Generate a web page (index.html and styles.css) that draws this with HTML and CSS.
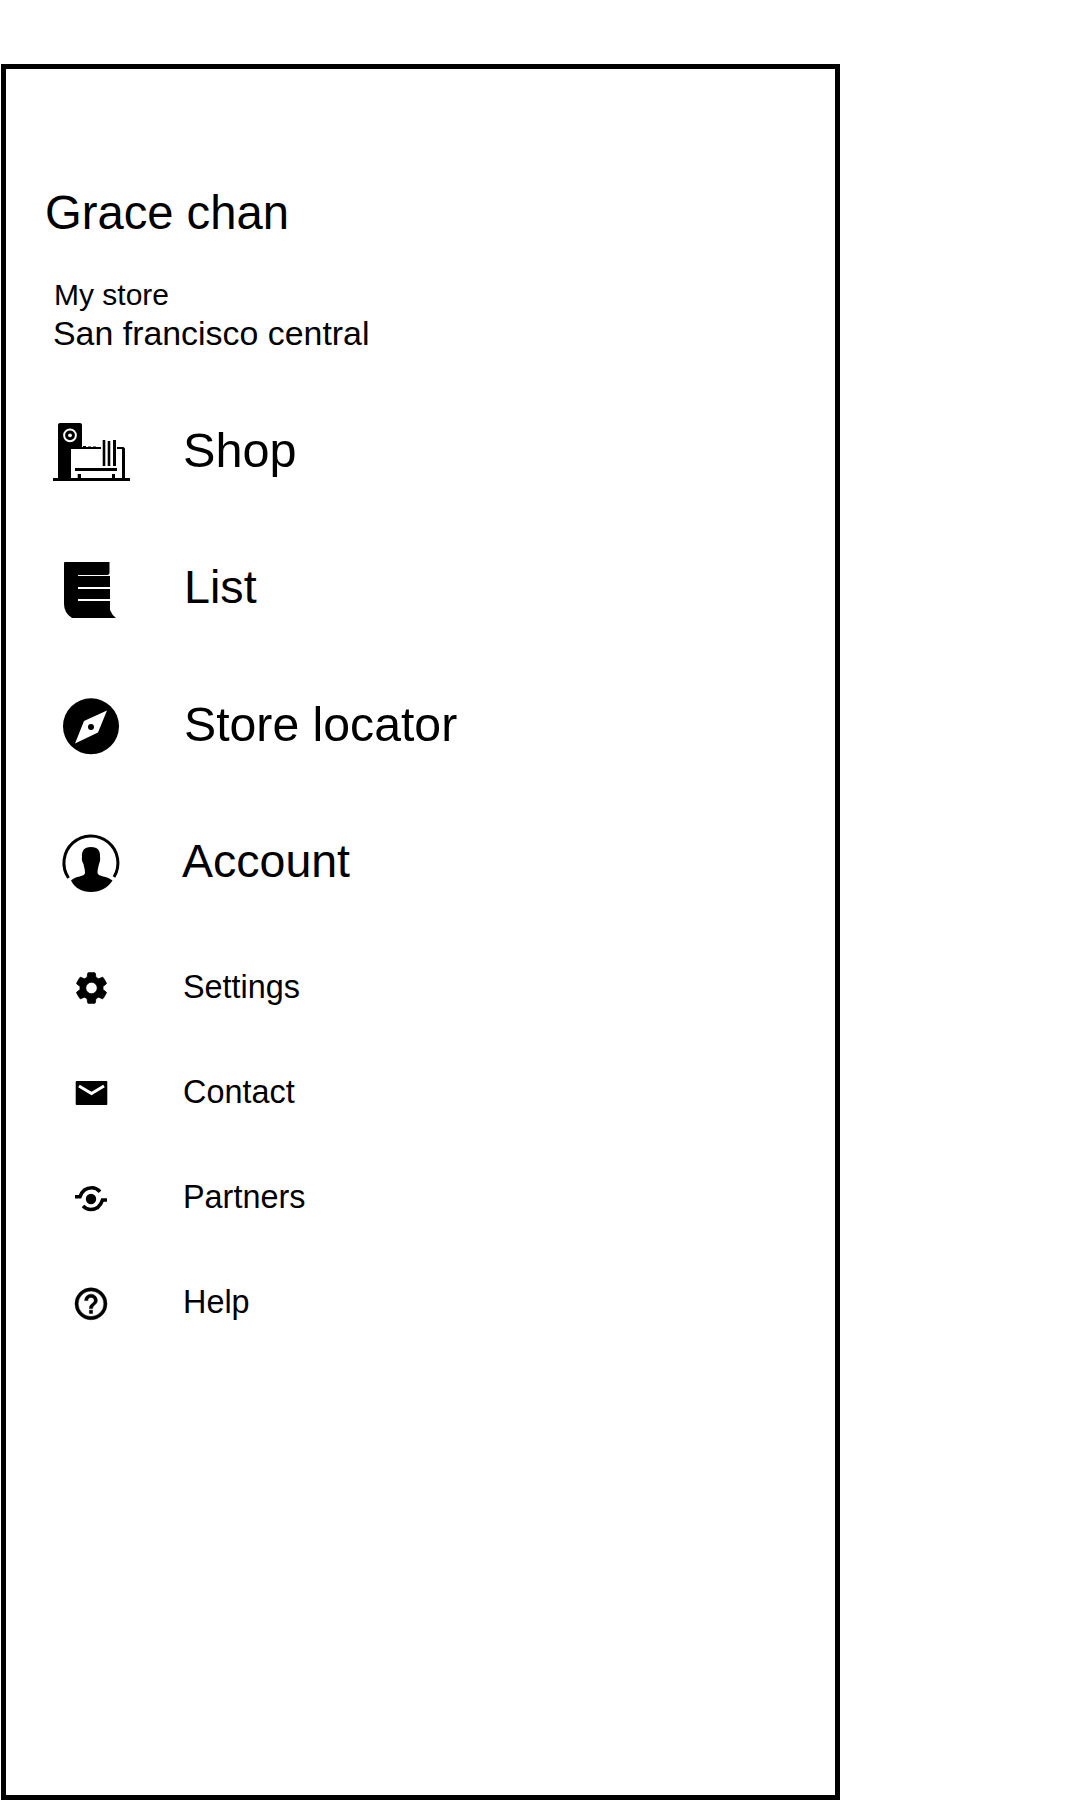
FILE: index.html
```html
<!DOCTYPE html>
<html lang="en">
<head>
<meta charset="utf-8">
<title>Store menu</title>
<link rel="stylesheet" href="styles.css">
</head>
<body>
<main class="drawer">
  <header class="profile">
    <h1 class="name">Grace chan</h1>
    <p class="store-label">My store</p>
    <p class="store-name">San francisco central</p>
  </header>
  <nav>
    <ul class="menu primary">
      <li class="item shop">
        <svg viewBox="0 -3 95 75"><path d="M13 63V10q0-2 2-2h20q2 0 2 2v22h19v2H26V63zM72 32h6.500l1.500 1.500V63h-3V34h-5zM38 31h3v1h2v-.5h3v.5h2v-.5h3v1H38zM57.700 25h2.600v26h-2.600zM62.700 26h2.600v25h-2.600zM68 25h3v26h-3zM30 53h42v3H30zM32.700 59H36v4h-3.300zM67 59h3v4h-3zM8 63h77v3H8z"/><circle cx="25" cy="20.300" r="5.900" fill="none" stroke="#fff" stroke-width="2"/><circle cx="25" cy="20.300" r="1.900" fill="#fff"/></svg>
        <span>Shop</span>
      </li>
      <li class="item list">
        <svg viewBox="0 -1 95 75"><path d="M19 13q0-1 1-1h44.500v11.500L63 25H33v1h32v11H33v2h32v10H33v2h32v9q2 5 6 8H27q-8-5-8-14z"/></svg>
        <span>List</span>
      </li>
      <li class="item locator">
        <svg viewBox="0 1 95 75"><circle cx="46" cy="41.300" r="28"/><path fill="#fff" d="M62 25.500 53 47.500 30 58.500l9-22.500z"/><circle cx="46" cy="42" r="3"/></svg>
        <span>Store locator</span>
      </li>
      <li class="item account">
        <svg viewBox="0 -2 95 75"><path d="M23.500 53A27 27 0 1 1 69 52" fill="none" stroke="#000" stroke-width="3"/><path d="M46 22c7 0 9.500 4 9 10 .5 2 0 5-1 7-.5 3-1.500 5-1.500 9 1 4 9 2.500 15 7.500-5 7.500-12 11.500-21.500 11.500s-16-4-20-11.500c5-5 13.500-3.500 14-7.500 0-4-1-6-1.500-9-1.500-2-2-5-1.500-7-.5-6 2-10 9-10z"/></svg>
        <span>Account</span>
      </li>
    </ul>
    <ul class="menu secondary">
      <li class="item">
        <svg viewBox="0 -1 55 55"><path stroke="#000" stroke-width=".5" transform="translate(7.300 8.800) scale(1.600)" d="M19.140 12.940c.04-.3.060-.61.060-.94 0-.32-.02-.64-.07-.94l2.030-1.580c.18-.14.230-.41.120-.61l-1.920-3.320c-.12-.22-.37-.29-.59-.22l-2.390.96c-.5-.38-1.030-.7-1.620-.94l-.36-2.540c-.04-.24-.24-.41-.48-.41h-3.840c-.24 0-.43.170-.47.410l-.36 2.540c-.59.240-1.130.570-1.620.940l-2.390-.96c-.22-.08-.47 0-.59.220L2.740 8.870c-.12.210-.08.470.120.610l2.030 1.580c-.05.300-.09.630-.09.940s.02.640.07.940l-2.030 1.580c-.18.140-.23.410-.12.610l1.920 3.320c.12.220.370.290.590.220l2.390-.96c.5.380 1.030.7 1.620.940l.36 2.540c.05.240.240.410.480.410h3.840c.24 0 .440-.17.470-.41l.36-2.540c.59-.24 1.130-.56 1.620-.94l2.390.96c.22.080.470 0 .590-.22l1.920-3.320c.12-.22.070-.47-.12-.61zM12 15.600A3.600 3.600 0 1 1 12 8.400a3.600 3.600 0 0 1 0 7.200z"/></svg>
        <span>Settings</span>
      </li>
      <li class="item">
        <svg viewBox="0 -1 55 55"><rect x="10.700" y="16" width="31.600" height="24" rx="1"/><path d="m14 21 12.500 7.500L39 21" fill="none" stroke="#fff" stroke-width="3"/></svg>
        <span>Contact</span>
      </li>
      <li class="item">
        <svg viewBox="0 -1 55 55"><circle cx="26" cy="29" r="5.200"/><path d="M10 26.700h5q3-9 12-9 4.500 0 8 4M42 30h-4.500q-3 9.500-12 9.500-4 0-7.500-3.500" fill="none" stroke="#000" stroke-width="3.600"/></svg>
        <span>Partners</span>
      </li>
      <li class="item help">
        <svg viewBox="0 -1 55 55"><path stroke="#000" stroke-width=".3" transform="translate(6.800 9.600) scale(1.600)" d="M11 18h2v-2h-2zm1-16a10 10 0 1 0 0 20 10 10 0 0 0 0-20zm0 18a8 8 0 1 1 0-16 8 8 0 0 1 0 16zm0-14a4 4 0 0 0-4 4h2a2 2 0 1 1 4 0c0 2-3 1.750-3 5h2c0-2.250 3-2.500 3-5a4 4 0 0 0-4-4z"/></svg>
        <span>Help</span>
      </li>
    </ul>
  </nav>
</main>
</body>
</html>
```
FILE: styles.css
```css
* { box-sizing: border-box; }
body {
  margin: 0;
  background: #fff;
  color: #000;
  font-family: "Liberation Sans", Arial, sans-serif;
}
.drawer {
  width: 839px;
  height: 1736px;
  margin: 64px 0 0 1px;
  border: 5px solid #000;
}
h1, p, ul { margin: 0; padding: 0; font-weight: 400; }
.profile {
  height: 312px;
  padding: 114px 0 0 39px;
  white-space: nowrap;
}
.name { font-size: 47.200px; line-height: 60px; }
.store-label { margin: 32px 0 0 9px; font-size: 30px; line-height: 39px; }
.store-name { margin-left: 8px; font-size: 33.900px; line-height: 39px; }
.menu { list-style: none; }
.item { display: flex; align-items: center; white-space: nowrap; }
.primary { padding-left: 39px; }
.primary .item { height: 137px; gap: 43px; font-size: 48.600px; }
.primary svg { width: 95px; height: 75px; }
.primary .list { font-size: 46.700px; gap: 44px; }
.primary .locator { font-size: 48.200px; gap: 44px; }
.primary .account { font-size: 46.500px; gap: 42px; }
.secondary { padding: 5px 0 0 59px; }
.secondary .item { height: 105px; gap: 63px; font-size: 32.400px; }
.secondary svg { width: 55px; height: 55px; }
.secondary span { padding-top: 2px; }
```
